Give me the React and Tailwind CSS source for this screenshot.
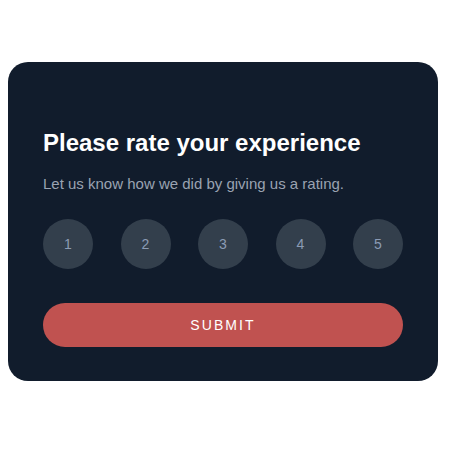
export default function App() {
  return (
    <div className="w-[450px] h-[450px] bg-white" style={{ fontFamily: '"Liberation Sans", Arial, sans-serif' }}>
      <div className="pt-[62px] pl-[8px]">
        <div className="w-[430px] h-[319px] bg-[#111c2c] rounded-[20px] pt-[65px] px-[35px]">
          <h1 className="text-[24px] leading-[32px] font-bold text-white">Please rate your experience</h1>
          <p className="mt-[15px] text-[15px] leading-[20px] text-[#9aa3b2]">Let us know how we did by giving us a rating.</p>
          <div className="mt-[25px] flex justify-between">
            {[1, 2, 3, 4, 5].map((n) => (
              <div key={n} className="w-[50px] h-[50px] rounded-full bg-[#333f4c] flex items-center justify-center text-[14px] text-[#8b9bb4]">
                {n}
              </div>
            ))}
          </div>
          <button className="mt-[34px] w-full h-[44px] rounded-full bg-[#c05250] text-white text-[14px] tracking-[0.15em]">
            SUBMIT
          </button>
        </div>
      </div>
    </div>
  );
}
